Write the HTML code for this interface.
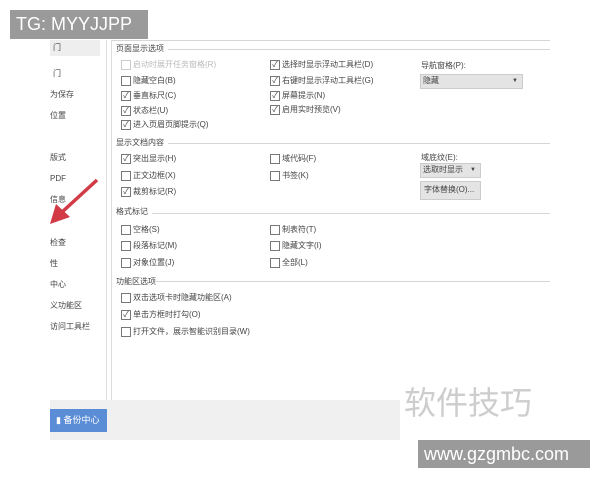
<!DOCTYPE html>
<html><head><meta charset="utf-8"><style>
body{margin:0;width:600px;height:480px;background:#fff;position:relative;overflow:hidden;font-family:"Liberation Sans","Noto Sans CJK SC",sans-serif;color:#444;}
.a{position:absolute;white-space:nowrap;font-size:8px;line-height:10px;}
.cb{position:absolute;width:8px;height:8px;border:1px solid #777;background:#fff;font-size:8px;line-height:8px;text-align:center;color:#444}
.h{position:absolute;height:1px;background:#d6d6d6}
</style></head><body>
<div style="position:absolute;left:50px;top:40px;width:56px;height:365px;background:#fff;border-right:1px solid #ddd"></div>
<div style="position:absolute;left:50px;top:40px;width:50px;height:16px;background:#eee"></div>
<div style="position:absolute;left:111px;top:40px;width:1px;height:360px;background:#ddd"></div>
<div style="position:absolute;left:50px;top:400px;width:350px;height:40px;background:#f0f0f0"></div>
<div style="position:absolute;left:50px;top:409px;width:57px;height:23px;background:#5b8dd6"></div>
<div class="a" style="left:56px;top:415px;color:#fff;font-size:9px">▮ 备份中心</div>
<div class="h" style="left:112px;top:40px;width:438px"></div>
<div class="a" style="left:53px;top:43px">门</div>
<div class="a" style="left:53px;top:69px">门</div>
<div class="a" style="left:50px;top:90px">为保存</div>
<div class="a" style="left:50px;top:111px">位置</div>
<div class="a" style="left:50px;top:153px">版式</div>
<div class="a" style="left:50px;top:174px">PDF</div>
<div class="a" style="left:50px;top:195px">信息</div>
<div class="a" style="left:50px;top:238px">检查</div>
<div class="a" style="left:50px;top:259px">性</div>
<div class="a" style="left:50px;top:280px">中心</div>
<div class="a" style="left:50px;top:301px">义功能区</div>
<div class="a" style="left:50px;top:322px">访问工具栏</div>
<svg style="position:absolute;left:45px;top:175px" width="60" height="55"><path d="M52 5 L16 38" stroke="#d23a45" stroke-width="3.5"/><path d="M5 49 L11 29 L25 42 Z" fill="#d23a45"/></svg>

<div class="a" style="left:116px;top:44px">页面显示选项</div><div class="h" style="left:168px;top:49px;width:382px"></div>
<div class="cb" style="left:121px;top:60px;border-color:#ccc"></div><div class="a" style="left:133px;top:60px;color:#bbb">启动时展开任务窗格(R)</div>
<div class="cb" style="left:121px;top:76px"></div><div class="a" style="left:133px;top:76px">隐藏空白(B)</div>
<div class="cb" style="left:121px;top:91px">✓</div><div class="a" style="left:133px;top:91px">垂直标尺(C)</div>
<div class="cb" style="left:121px;top:106px">✓</div><div class="a" style="left:133px;top:106px">状态栏(U)</div>
<div class="cb" style="left:121px;top:120px">✓</div><div class="a" style="left:133px;top:120px">进入页眉页脚提示(Q)</div>
<div class="cb" style="left:270px;top:60px">✓</div><div class="a" style="left:282px;top:60px">选择时显示浮动工具栏(D)</div>
<div class="cb" style="left:270px;top:76px">✓</div><div class="a" style="left:282px;top:76px">右键时显示浮动工具栏(G)</div>
<div class="cb" style="left:270px;top:91px">✓</div><div class="a" style="left:282px;top:91px">屏幕提示(N)</div>
<div class="cb" style="left:270px;top:105px">✓</div><div class="a" style="left:282px;top:105px">启用实时预览(V)</div>
<div class="a" style="left:421px;top:61px">导航窗格(P):</div>
<div style="position:absolute;left:420px;top:74px;width:101px;height:13px;background:#e4e4e4;border:1px solid #ccc"></div>
<div class="a" style="left:423px;top:76px">隐藏</div><div class="a" style="left:512px;top:76px;font-size:6px">▼</div>

<div class="a" style="left:116px;top:138px">显示文档内容</div><div class="h" style="left:168px;top:143px;width:382px"></div>
<div class="cb" style="left:121px;top:154px">✓</div><div class="a" style="left:133px;top:154px">突出显示(H)</div>
<div class="cb" style="left:121px;top:171px"></div><div class="a" style="left:133px;top:171px">正文边框(X)</div>
<div class="cb" style="left:121px;top:187px">✓</div><div class="a" style="left:133px;top:187px">裁剪标记(R)</div>
<div class="cb" style="left:270px;top:154px"></div><div class="a" style="left:282px;top:154px">域代码(F)</div>
<div class="cb" style="left:270px;top:171px"></div><div class="a" style="left:282px;top:171px">书签(K)</div>
<div class="a" style="left:421px;top:153px">域底纹(E):</div>
<div style="position:absolute;left:420px;top:163px;width:59px;height:13px;background:#e4e4e4;border:1px solid #ccc"></div>
<div class="a" style="left:423px;top:165px">选取时显示</div><div class="a" style="left:470px;top:165px;font-size:6px">▼</div>
<div style="position:absolute;left:420px;top:181px;width:59px;height:17px;background:#e4e4e4;border:1px solid #ccc"></div>
<div class="a" style="left:424px;top:185px">字体替换(O)...</div>

<div class="a" style="left:116px;top:207px">格式标记</div><div class="h" style="left:152px;top:213px;width:398px"></div>
<div class="cb" style="left:121px;top:225px"></div><div class="a" style="left:133px;top:225px">空格(S)</div>
<div class="cb" style="left:121px;top:241px"></div><div class="a" style="left:133px;top:241px">段落标记(M)</div>
<div class="cb" style="left:121px;top:258px"></div><div class="a" style="left:133px;top:258px">对象位置(J)</div>
<div class="cb" style="left:270px;top:225px"></div><div class="a" style="left:282px;top:225px">制表符(T)</div>
<div class="cb" style="left:270px;top:241px"></div><div class="a" style="left:282px;top:241px">隐藏文字(I)</div>
<div class="cb" style="left:270px;top:258px"></div><div class="a" style="left:282px;top:258px">全部(L)</div>

<div class="a" style="left:116px;top:277px">功能区选项</div><div class="h" style="left:156px;top:281px;width:394px"></div>
<div class="cb" style="left:121px;top:293px"></div><div class="a" style="left:133px;top:293px">双击选项卡时隐藏功能区(A)</div>
<div class="cb" style="left:121px;top:310px">✓</div><div class="a" style="left:133px;top:310px">单击方框时打勾(O)</div>
<div class="cb" style="left:121px;top:327px"></div><div class="a" style="left:133px;top:327px">打开文件，展示智能识别目录(W)</div>

<div class="a" style="left:404px;top:384px;font-size:32px;line-height:38px;color:#cdcdcd">软件技巧</div>
<div style="position:absolute;left:10px;top:10px;width:138px;height:29px;background:#9a9a9a;color:#fff;font-size:18px;line-height:29px;padding-left:6px;box-sizing:border-box">TG: MYYJJPP</div>
<div style="position:absolute;left:418px;top:440px;width:172px;height:28px;background:#9a9a9a;color:#fff;font-size:18px;line-height:28px;padding-left:6px;box-sizing:border-box">www.gzgmbc.com</div>
</body></html>
